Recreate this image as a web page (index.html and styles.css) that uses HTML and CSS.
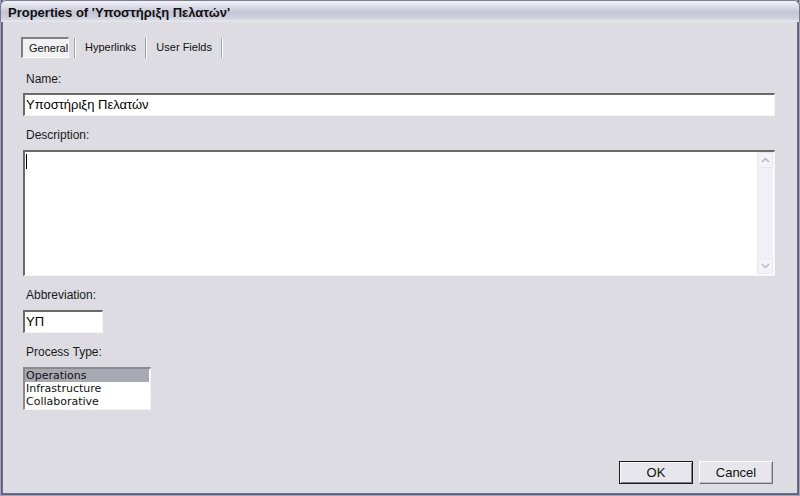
FILE: index.html
```html
<!DOCTYPE html>
<html>
<head>
<meta charset="utf-8">
<link rel="stylesheet" href="styles.css">
</head>
<body>
<div class="window">
  <div class="titlebar">Properties of 'Υποστήριξη Πελατών'</div>
  <div class="content">
    <div class="tabs">
      <div class="tab active">General</div>
      <div class="sep"></div>
      <div class="tab">Hyperlinks</div>
      <div class="sep"></div>
      <div class="tab">User Fields</div>
      <div class="sep"></div>
    </div>
    <div class="form">
      <div class="label first">Name:</div>
      <div class="field name">Υποστήριξη Πελατών</div>
      <div class="label">Description:</div>
      <div class="field memo">
        <div class="memo-text"><span class="caret"></span></div>
        <div class="scrollbar">
          <div class="sbtn"><svg width="9" height="6" viewBox="0 0 9 6"><path d="M1 5 L4.5 1.5 L8 5" fill="none" stroke="#b8b8c0" stroke-width="1.5"/></svg></div>
          <div class="strack"></div>
          <div class="sbtn"><svg width="9" height="6" viewBox="0 0 9 6"><path d="M1 1 L4.5 4.5 L8 1" fill="none" stroke="#b8b8c0" stroke-width="1.5"/></svg></div>
        </div>
      </div>
      <div class="label">Abbreviation:</div>
      <div class="field abbr">ΥΠ</div>
      <div class="label">Process Type:</div>
      <div class="listbox">
        <div class="item selected">Operations</div>
        <div class="item">Infrastructure</div>
        <div class="item">Collaborative</div>
      </div>
    </div>
    <div class="buttons">
      <div class="btn default">OK</div>
      <div class="btn">Cancel</div>
    </div>
  </div>
</div>
</body>
</html>
```

FILE: styles.css
```css
html, body {
  margin: 0;
  padding: 0;
  background: #dcdce2;
}
.window {
  width: 800px;
  height: 496px;
  box-sizing: border-box;
  display: flex;
  flex-direction: column;
  background: #dcdce2;
  border: 1px solid #a6a6b8;
  border-top: none;
  box-shadow: inset 1px 0 0 #5c5c78, inset -1px 0 0 #5c5c78, inset 0 -1px 0 #5c5c78, inset 2px 0 0 #6e6e88, inset -2px 0 0 #6e6e88, inset 0 -2px 0 #6e6e88;
  font-family: "Liberation Sans", Arial, sans-serif;
  color: #000;
}
.titlebar {
  height: 22px;
  box-sizing: border-box;
  margin: 0 -1px;
  padding: 4px 0 0 7px;
  border: 1px solid #7a7a92;
  border-bottom: none;
  border-radius: 6px 6px 0 0;
  background: linear-gradient(#f4f4f8 0%, #dedeea 25%, #c4c4d4 55%, #d0d0dc 80%, #e8e8f0 100%);
  font-weight: bold;
  font-size: 13px;
  line-height: 15px;
  color: #101010;
}
.content {
  flex: 1;
  display: flex;
  flex-direction: column;
  padding: 15px 23px 11px 20px;
}
.tabs {
  display: flex;
  align-items: center;
  height: 21px;
  margin-left: 0;
}
.tab {
  font-size: 11px;
  padding: 0 9px 0 10px;
  height: 21px;
  line-height: 21px;
  color: #111;
}
.tab.active {
  box-sizing: border-box;
  width: 48px;
  padding: 0 0 0 6px;
  margin-right: 5px;
  background: #f2f2f4;
  border-top: 2px solid #808080;
  border-left: 2px solid #808080;
  border-right: 1px solid #ffffff;
  border-bottom: 1px solid #ffffff;
  line-height: 19px;
}
.sep {
  width: 1px;
  height: 20px;
  background: #a0a0a8;
  box-shadow: 1px 0 0 #ffffff;
}
.form {
  display: flex;
  flex-direction: column;
  margin-left: 2px;
}
.label {
  font-size: 12px;
  line-height: 14px;
  margin: 12px 0 8px 3px;
  color: #1a1a1a;
}
.label.first {
  margin-top: 14px;
  margin-bottom: 7px;
}
.field {
  box-sizing: border-box;
  background: #fff;
  border-top: 2px solid #6a6a6a;
  border-left: 2px solid #6a6a6a;
  border-right: 1px solid #f4f4f4;
  border-bottom: 1px solid #f4f4f4;
}
.name {
  width: 752px;
  height: 23px;
  font-size: 13px;
  line-height: 19px;
  padding-left: 1px;
}
.memo {
  width: 752px;
  height: 126px;
  display: flex;
}
.memo-text {
  flex: 1;
  padding: 2px 0 0 1px;
}
.caret {
  display: block;
  width: 1px;
  height: 15px;
  background: #000;
}
.scrollbar {
  width: 16px;
  margin: 0 1px 1px 0;
  display: flex;
  flex-direction: column;
  background: #f2f2f6;
}
.sbtn {
  height: 16px;
  box-sizing: border-box;
  border: 1px solid #e6e6ec;
  background: #f4f4f8;
  display: flex;
  align-items: center;
  justify-content: center;
}
.strack {
  flex: 1;
  background: #f0f0f6;
  border-left: 1px solid #e8e8ee;
}
.abbr {
  width: 80px;
  height: 23px;
  font-size: 13px;
  line-height: 19px;
  padding-left: 1px;
}
.listbox {
  box-sizing: border-box;
  width: 128px;
  height: 43px;
  background: #fff;
  border-top: 2px solid #8a8a8a;
  border-left: 2px solid #8a8a8a;
  border-right: 1px solid #f4f4f4;
  border-bottom: 1px solid #f4f4f4;
  padding: 0 1px 0 0;
  font-family: "DejaVu Sans", Verdana, sans-serif;
  font-size: 11px;
}
.item {
  height: 13px;
  line-height: 13px;
  padding-left: 1px;
  color: #111;
}
.item.selected {
  background: #a9a9b4;
}
.buttons {
  margin-top: auto;
  display: flex;
  justify-content: flex-end;
  gap: 6px;
  margin-right: 3px;
}
.btn {
  box-sizing: border-box;
  width: 74px;
  height: 23px;
  background: #e6e6ec;
  border-top: 1px solid #ffffff;
  border-left: 1px solid #ffffff;
  border-right: 1px solid #707070;
  border-bottom: 1px solid #707070;
  box-shadow: inset -1px -1px 0 #b8b8c0;
  font-size: 13px;
  line-height: 21px;
  text-align: center;
  color: #111;
}
.btn.default {
  border: 1px solid #1a1a1a;
  box-shadow: inset 1px 1px 0 #ffffff, inset -1px -1px 0 #808080;
}
```
